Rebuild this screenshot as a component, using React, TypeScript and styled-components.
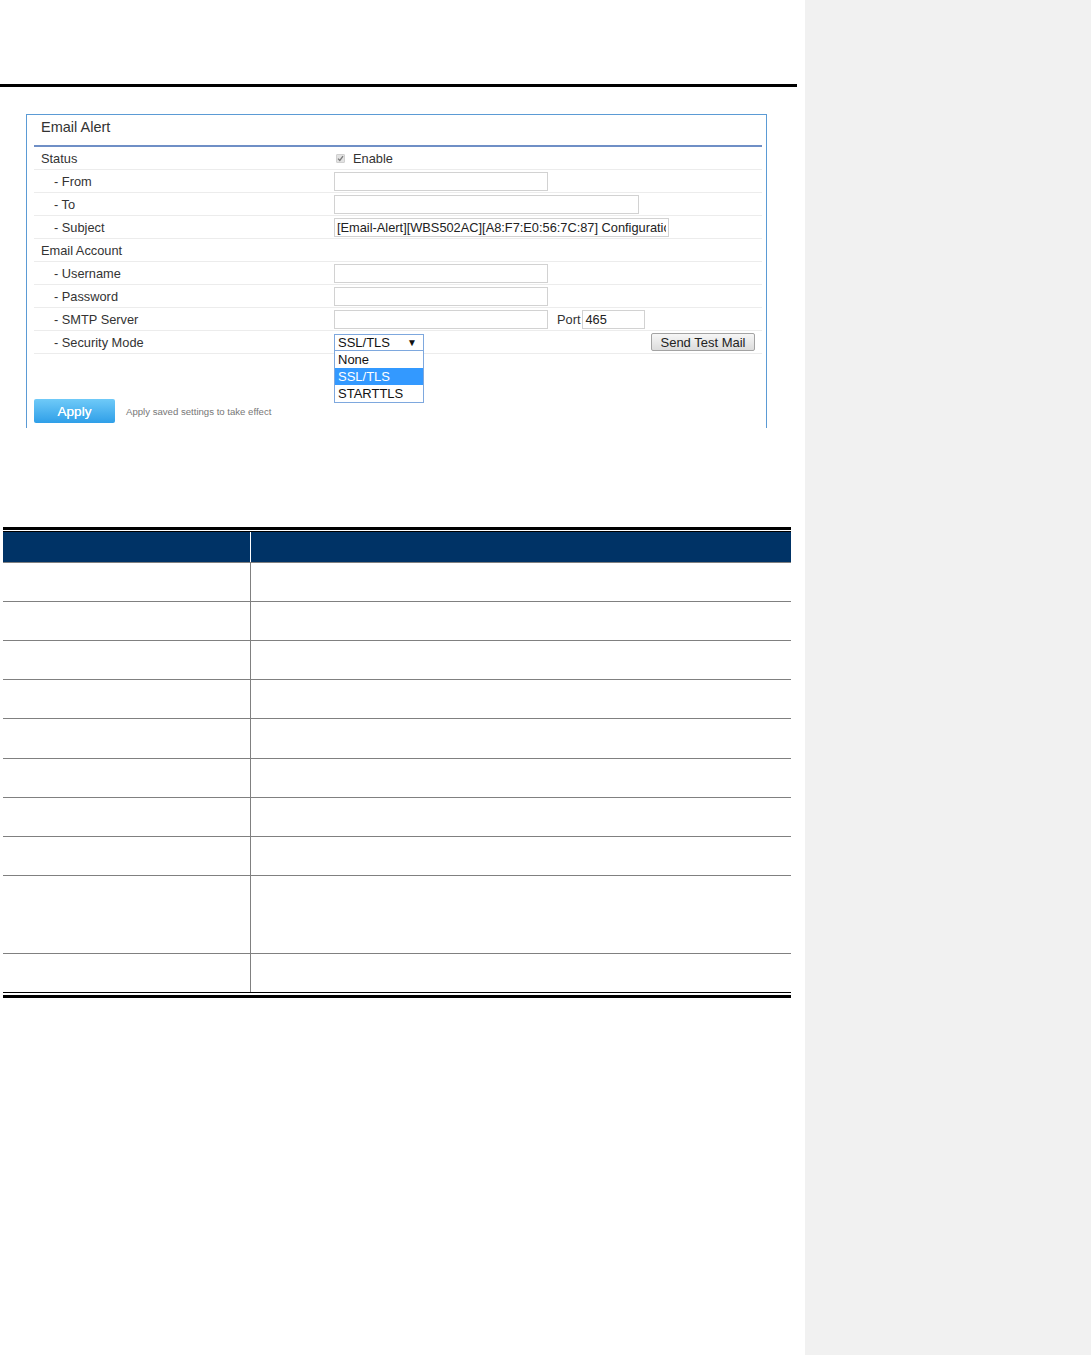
import React from "react";
import styled, { createGlobalStyle } from "styled-components";

const Global = createGlobalStyle`
  html, body { margin: 0; padding: 0; background: #ffffff; }
  body { font-family: "Liberation Sans", Arial, sans-serif; }
  * { box-sizing: border-box; }
`;

const Page = styled.div`
  display: flex;
  width: 1091px;
  min-height: 1355px;
`;

const Doc = styled.div`
  width: 805px;
  flex: none;
  background: #ffffff;
  display: flex;
  flex-direction: column;
`;

const CommentPane = styled.div`
  flex: 1;
  background: #f1f1f1;
`;

const TopRule = styled.div`
  margin-top: 84px;
  width: 797px;
  height: 3px;
  background: #000;
`;

const Panel = styled.section`
  margin: 27px 0 0 26px;
  width: 741px;
  height: 314px;
  border: 1px solid #5b9bd5;
  border-bottom: none;
  padding: 0 4px 0 7px;
  display: flex;
  flex-direction: column;
  color: #333;
`;

const TitleBar = styled.div`
  height: 32px;
  display: flex;
  align-items: flex-start;
  padding: 4px 0 0 7px;
  font-size: 14.5px;
  line-height: 17px;
  border-bottom: 2px solid #6f8fc6;
`;

const Row = styled.div`
  display: grid;
  grid-template-columns: 300px 1fr;
  height: 23px;
  border-bottom: 1px solid #ececec;
  font-size: 12.8px;
`;

const Label = styled.div<{ $sub?: boolean }>`
  display: flex;
  align-items: center;
  padding-left: ${(p) => (p.$sub ? "20px" : "7px")};
`;

const Value = styled.div`
  display: flex;
  align-items: center;
  position: relative;
`;

const TextBox = styled.input<{ $w: number }>`
  width: ${(p) => p.$w}px;
  height: 19px;
  border: 1px solid #d2d2d2;
  background: #fff;
  padding: 0 2px;
  font-family: "Liberation Sans", Arial, sans-serif;
  font-size: 12.8px;
  color: #222;
  outline: none;
  margin: 0;
`;

const CheckBox = styled.span`
  width: 9px;
  height: 9px;
  margin-left: 2px;
  background: #e2e2e2;
  border: 1px solid #d0d0d0;
  border-radius: 1px;
  display: inline-flex;
  align-items: center;
  justify-content: center;
`;

const CheckText = styled.span`
  margin-left: 8px;
`;

const PortLabel = styled.span`
  margin-left: 9px;
  margin-right: 2px;
`;

const SelectWrap = styled.div`
  position: relative;
  width: 90px;
`;

const SelectBox = styled.div`
  height: 17px;
  border: 1px solid #7ea8de;
  display: flex;
  align-items: center;
  justify-content: space-between;
  padding: 0 6px 0 3px;
  font-size: 13px;
  color: #111;
  background: #fff;
`;

const Arrow = styled.span`
  font-size: 10px;
`;

const OptionList = styled.div`
  position: absolute;
  top: 16px;
  left: 0;
  width: 90px;
  border: 1px solid #7ea8de;
  background: #fff;
  z-index: 2;
`;

const OptionItem = styled.div<{ $active?: boolean }>`
  height: 17px;
  line-height: 17px;
  padding-left: 3px;
  font-size: 13px;
  color: ${(p) => (p.$active ? "#fff" : "#111")};
  background: ${(p) => (p.$active ? "#3399ff" : "#fff")};
`;

const GrayButton = styled.button`
  margin-left: auto;
  margin-right: 7px;
  width: 104px;
  height: 18px;
  padding: 0;
  border: 1px solid #a3a3a3;
  border-radius: 2px;
  background: linear-gradient(#f6f6f6, #dcdcdc);
  font-family: "Liberation Sans", Arial, sans-serif;
  font-size: 13px;
  color: #222;
`;

const ApplyBar = styled.div`
  margin-top: 45px;
  display: flex;
  align-items: center;
`;

const ApplyButton = styled.button`
  width: 81px;
  height: 24px;
  padding: 0;
  border: none;
  border-radius: 2px;
  background: linear-gradient(#6fcaf8, #2f9fe8);
  color: #fff;
  font-family: "Liberation Sans", Arial, sans-serif;
  font-size: 13.5px;
  font-weight: normal;
  text-shadow: 0 0 0.6px #fff;
`;

const ApplyNote = styled.span`
  margin-left: 11px;
  font-size: 9.6px;
  color: #777;
`;

const Table = styled.div`
  margin: 99px 0 0 3px;
  width: 788px;
  border-top: 3px solid #000;
  padding-top: 1px;
`;

const TableInner = styled.div`
  border-top: 1px solid #000;
`;

const HeadRow = styled.div`
  display: grid;
  grid-template-columns: 247px 1px 1fr;
  height: 31px;
  background: #003366;
  border-bottom: 1px solid #808080;
`;

const BodyRow = styled.div<{ $h: number; $last?: boolean }>`
  display: grid;
  grid-template-columns: 247px 1px 1fr;
  height: ${(p) => p.$h}px;
  border-bottom: 1px solid ${(p) => (p.$last ? "#000" : "#808080")};
`;

const Divider = styled.div<{ $light?: boolean }>`
  background: ${(p) => (p.$light ? "#ffffff" : "#808080")};
`;

const BottomRule = styled.div`
  margin-top: 2px;
  height: 3px;
  background: #000;
`;

const rows = [39, 39, 39, 39, 40, 39, 39, 39, 78, 39];

export default function App() {
  return (
    <>
      <Global />
      <Page>
        <Doc>
          <TopRule />
          <Panel>
            <TitleBar>Email Alert</TitleBar>
            <Row>
              <Label>Status</Label>
              <Value>
                <CheckBox>
                  <svg width="7" height="7" viewBox="0 0 7 7">
                    <path d="M1 3.6 L2.8 5.4 L6 1.2" stroke="#7a7a7a" strokeWidth="1.3" fill="none" />
                  </svg>
                </CheckBox>
                <CheckText>Enable</CheckText>
              </Value>
            </Row>
            <Row>
              <Label $sub>- From</Label>
              <Value>
                <TextBox $w={214} readOnly value="" />
              </Value>
            </Row>
            <Row>
              <Label $sub>- To</Label>
              <Value>
                <TextBox $w={305} readOnly value="" />
              </Value>
            </Row>
            <Row>
              <Label $sub>- Subject</Label>
              <Value>
                <TextBox $w={335} readOnly value="[Email-Alert][WBS502AC][A8:F7:E0:56:7C:87] Configuration" />
              </Value>
            </Row>
            <Row>
              <Label>Email Account</Label>
              <Value />
            </Row>
            <Row>
              <Label $sub>- Username</Label>
              <Value>
                <TextBox $w={214} readOnly value="" />
              </Value>
            </Row>
            <Row>
              <Label $sub>- Password</Label>
              <Value>
                <TextBox $w={214} readOnly value="" />
              </Value>
            </Row>
            <Row>
              <Label $sub>- SMTP Server</Label>
              <Value>
                <TextBox $w={214} readOnly value="" />
                <PortLabel>Port</PortLabel>
                <TextBox $w={63} readOnly value="465" />
              </Value>
            </Row>
            <Row>
              <Label $sub>- Security Mode</Label>
              <Value>
                <SelectWrap>
                  <SelectBox>
                    <span>SSL/TLS</span>
                    <Arrow>▼</Arrow>
                  </SelectBox>
                  <OptionList>
                    <OptionItem>None</OptionItem>
                    <OptionItem $active>SSL/TLS</OptionItem>
                    <OptionItem>STARTTLS</OptionItem>
                  </OptionList>
                </SelectWrap>
                <GrayButton>Send Test Mail</GrayButton>
              </Value>
            </Row>
            <ApplyBar>
              <ApplyButton>Apply</ApplyButton>
              <ApplyNote>Apply saved settings to take effect</ApplyNote>
            </ApplyBar>
          </Panel>
          <Table>
            <TableInner>
              <HeadRow>
                <div />
                <Divider $light />
                <div />
              </HeadRow>
              {rows.map((h, i) => (
                <BodyRow key={i} $h={h} $last={i === rows.length - 1}>
                  <div />
                  <Divider />
                  <div />
                </BodyRow>
              ))}
            </TableInner>
            <BottomRule />
          </Table>
        </Doc>
        <CommentPane />
      </Page>
    </>
  );
}
